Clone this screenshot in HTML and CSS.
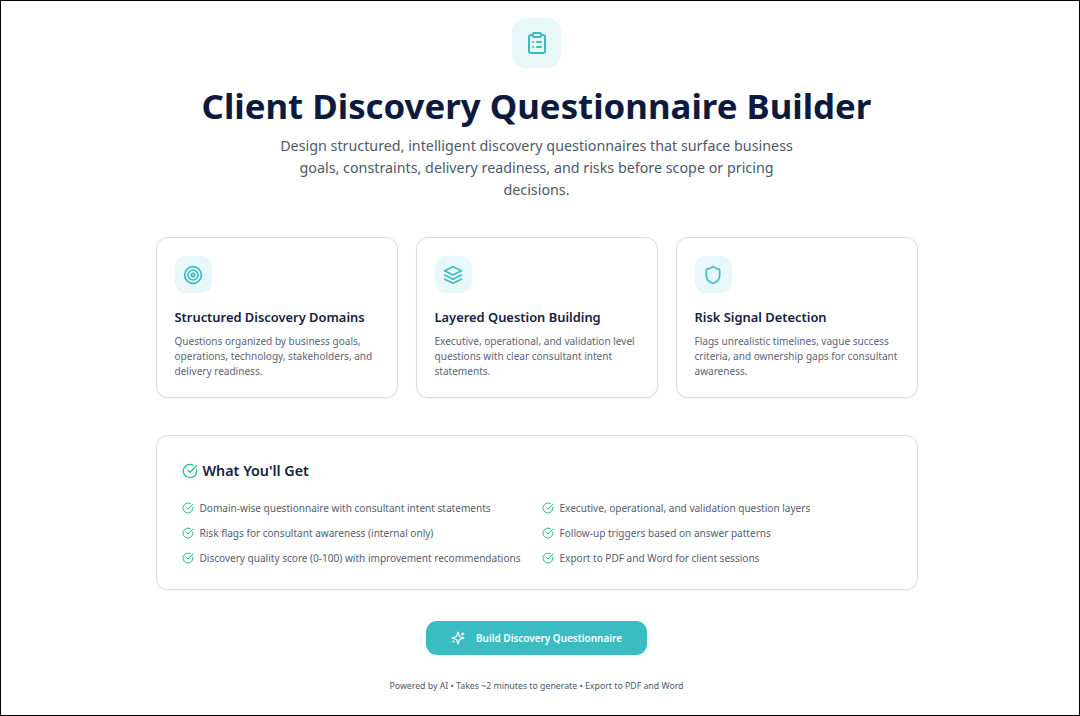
FILE: index.html
```html
<!DOCTYPE html>
<html lang="en">
<head>
    <meta charset="UTF-8">
    <title>Client Discovery Questionnaire Builder</title>
    <link rel="stylesheet" href="styles.css">
</head>
<body>
<div class="page">
    <div class="hero-icon">
        <svg width="24" height="24" viewBox="0 0 24 24" fill="none" stroke="#3bbcc3" stroke-width="2" stroke-linecap="round" stroke-linejoin="round">
            <rect x="8" y="2" width="8" height="4" rx="1"/>
            <path d="M16 4h2a2 2 0 0 1 2 2v14a2 2 0 0 1-2 2H6a2 2 0 0 1-2-2V6a2 2 0 0 1 2-2h2"/>
            <path d="M12 11h4M12 16h4M8 11h.01M8 16h.01"/>
        </svg>
    </div>
    <h1>Client Discovery Questionnaire Builder</h1>
    <p class="lead">Design structured, intelligent discovery questionnaires that surface business goals, constraints, delivery readiness, and risks before scope or pricing decisions.</p>

    <div class="cards">
        <div class="card">
            <div class="card-icon">
                <svg width="20" height="20" viewBox="0 0 24 24" fill="none" stroke="#3bbcc3" stroke-width="2" stroke-linecap="round" stroke-linejoin="round">
                    <circle cx="12" cy="12" r="10"/><circle cx="12" cy="12" r="6"/><circle cx="12" cy="12" r="2"/>
                </svg>
            </div>
            <h3>Structured Discovery Domains</h3>
            <p>Questions organized by business goals, operations, technology, stakeholders, and delivery readiness.</p>
        </div>
        <div class="card">
            <div class="card-icon">
                <svg width="20" height="20" viewBox="0 0 24 24" fill="none" stroke="#3bbcc3" stroke-width="2" stroke-linecap="round" stroke-linejoin="round">
                    <path d="M12 2 2 7l10 5 10-5-10-5z"/><path d="m2 12 10 5 10-5"/><path d="m2 17 10 5 10-5"/>
                </svg>
            </div>
            <h3>Layered Question Building</h3>
            <p>Executive, operational, and validation level questions with clear consultant intent statements.</p>
        </div>
        <div class="card">
            <div class="card-icon">
                <svg width="20" height="20" viewBox="0 0 24 24" fill="none" stroke="#3bbcc3" stroke-width="2" stroke-linecap="round" stroke-linejoin="round">
                    <path d="M20 13c0 5-3.5 7.5-7.66 8.95a1 1 0 0 1-.67-.01C7.5 20.5 4 18 4 13V6a1 1 0 0 1 1-1c2 0 4.5-1.2 6.24-2.72a1.17 1.17 0 0 1 1.52 0C14.51 3.81 17 5 19 5a1 1 0 0 1 1 1z"/>
                </svg>
            </div>
            <h3>Risk Signal Detection</h3>
            <p>Flags unrealistic timelines, vague success criteria, and ownership gaps for consultant awareness.</p>
        </div>
    </div>

    <div class="panel">
        <h2>
            <svg class="check" width="16" height="16" viewBox="0 0 24 24"><path d="M21.8 10A10 10 0 1 1 17 3.34"/><path d="m9 11 3 3L22 4"/></svg>
            What You'll Get
        </h2>
        <ul class="get-list">
            <li><svg class="check" width="12" height="12" viewBox="0 0 24 24"><path d="M21.8 10A10 10 0 1 1 17 3.34"/><path d="m9 11 3 3L22 4"/></svg>Domain-wise questionnaire with consultant intent statements</li>
            <li><svg class="check" width="12" height="12" viewBox="0 0 24 24"><path d="M21.8 10A10 10 0 1 1 17 3.34"/><path d="m9 11 3 3L22 4"/></svg>Executive, operational, and validation question layers</li>
            <li><svg class="check" width="12" height="12" viewBox="0 0 24 24"><path d="M21.8 10A10 10 0 1 1 17 3.34"/><path d="m9 11 3 3L22 4"/></svg>Risk flags for consultant awareness (internal only)</li>
            <li><svg class="check" width="12" height="12" viewBox="0 0 24 24"><path d="M21.8 10A10 10 0 1 1 17 3.34"/><path d="m9 11 3 3L22 4"/></svg>Follow-up triggers based on answer patterns</li>
            <li><svg class="check" width="12" height="12" viewBox="0 0 24 24"><path d="M21.8 10A10 10 0 1 1 17 3.34"/><path d="m9 11 3 3L22 4"/></svg>Discovery quality score (0-100) with improvement recommendations</li>
            <li><svg class="check" width="12" height="12" viewBox="0 0 24 24"><path d="M21.8 10A10 10 0 1 1 17 3.34"/><path d="m9 11 3 3L22 4"/></svg>Export to PDF and Word for client sessions</li>
        </ul>
    </div>

    <button class="build-btn" type="button">
        <svg width="14" height="14" viewBox="0 0 24 24" fill="none" stroke="#fff" stroke-width="2" stroke-linecap="round" stroke-linejoin="round">
            <path d="M9.94 15.5A2 2 0 0 0 8.5 14.06l-6.14-1.58a.5.5 0 0 1 0-.96L8.5 9.94A2 2 0 0 0 9.94 8.5l1.58-6.14a.5.5 0 0 1 .96 0l1.58 6.14a2 2 0 0 0 1.44 1.44l6.14 1.58a.5.5 0 0 1 0 .96l-6.14 1.58a2 2 0 0 0-1.44 1.44l-1.58 6.14a.5.5 0 0 1-.96 0z"/>
            <path d="M20 3v4M22 5h-4M4 17v2M5 18H3"/>
        </svg>
        Build Discovery Questionnaire
    </button>
    <p class="foot">Powered by AI • Takes ~2 minutes to generate • Export to PDF and Word</p>
</div>
</body>
</html>
```

FILE: styles.css
```css
* {
    margin: 0;
    padding: 0;
    box-sizing: border-box;
}
html, body {
    height: 100%;
    background: #fff;
}
body {
    font-family: "Noto Sans", "Open Sans", sans-serif;
    color: #0f1b3d;
}
.page {
    height: 716px;
    border: 1px solid #000;
    display: flex;
    flex-direction: column;
    align-items: center;
    padding: 17px 7px 0 0;
    overflow: hidden;
}
.hero-icon {
    width: 49px;
    height: 50px;
    border-radius: 14px;
    background: #e8f7f8;
    display: flex;
    align-items: center;
    justify-content: center;
}
h1 {
    font-size: 34.8px;
    line-height: 44px;
    font-weight: 700;
    color: #0c1a3e;
    margin-top: 16px;
}
.lead {
    width: 530px;
    margin-top: 7px;
    font-size: 14.3px;
    line-height: 22px;
    text-align: center;
    color: #4d596b;
}
.cards {
    width: 762px;
    margin-top: 36px;
    display: grid;
    grid-template-columns: repeat(3, 1fr);
    gap: 18px;
}
.card {
    height: 161px;
    padding: 18px 18px 0;
    border: 1px solid #d9dce4;
    border-radius: 12px;
    box-shadow: 0 1px 2px rgba(0, 0, 0, .07);
    background: #fff;
}
.card-icon {
    width: 37px;
    height: 37px;
    border-radius: 11px;
    background: #e8f7f8;
    display: flex;
    align-items: center;
    justify-content: center;
}
.card h3 {
    margin-top: 14px;
    font-size: 12.9px;
    line-height: 20px;
    font-weight: 600;
    color: #14213f;
}
.card p {
    margin-top: 7px;
    font-size: 10.05px;
    line-height: 15px;
    color: #5a6577;
}
.panel {
    width: 762px;
    height: 155px;
    margin-top: 37px;
    padding: 24px 25px 0;
    border: 1px solid #d9dce4;
    border-radius: 12px;
    box-shadow: 0 1px 2px rgba(0, 0, 0, .07);
}
.panel h2 {
    display: flex;
    align-items: center;
    gap: 5px;
    font-size: 14.3px;
    line-height: 22px;
    font-weight: 600;
    color: #14213f;
}
.check {
    flex: none;
    fill: none;
    stroke: #2dbe8f;
    stroke-width: 2;
    stroke-linecap: round;
    stroke-linejoin: round;
}
.get-list {
    list-style: none;
    margin-top: 17px;
    display: grid;
    grid-template-columns: 360px 1fr;
    row-gap: 7px;
}
.get-list li {
    display: flex;
    align-items: center;
    gap: 6px;
    font-size: 10.05px;
    line-height: 18px;
    color: #535e70;
}
.build-btn {
    width: 221px;
    height: 34px;
    margin-top: 31px;
    border: 0;
    border-radius: 11px;
    background: #3bbcc3;
    color: #fff;
    font-family: inherit;
    font-size: 9.95px;
    font-weight: 600;
    display: flex;
    align-items: center;
    justify-content: center;
    gap: 11px;
}
.foot {
    margin-top: 24px;
    font-size: 8.75px;
    line-height: 14px;
    color: #4d596b;
}
```
